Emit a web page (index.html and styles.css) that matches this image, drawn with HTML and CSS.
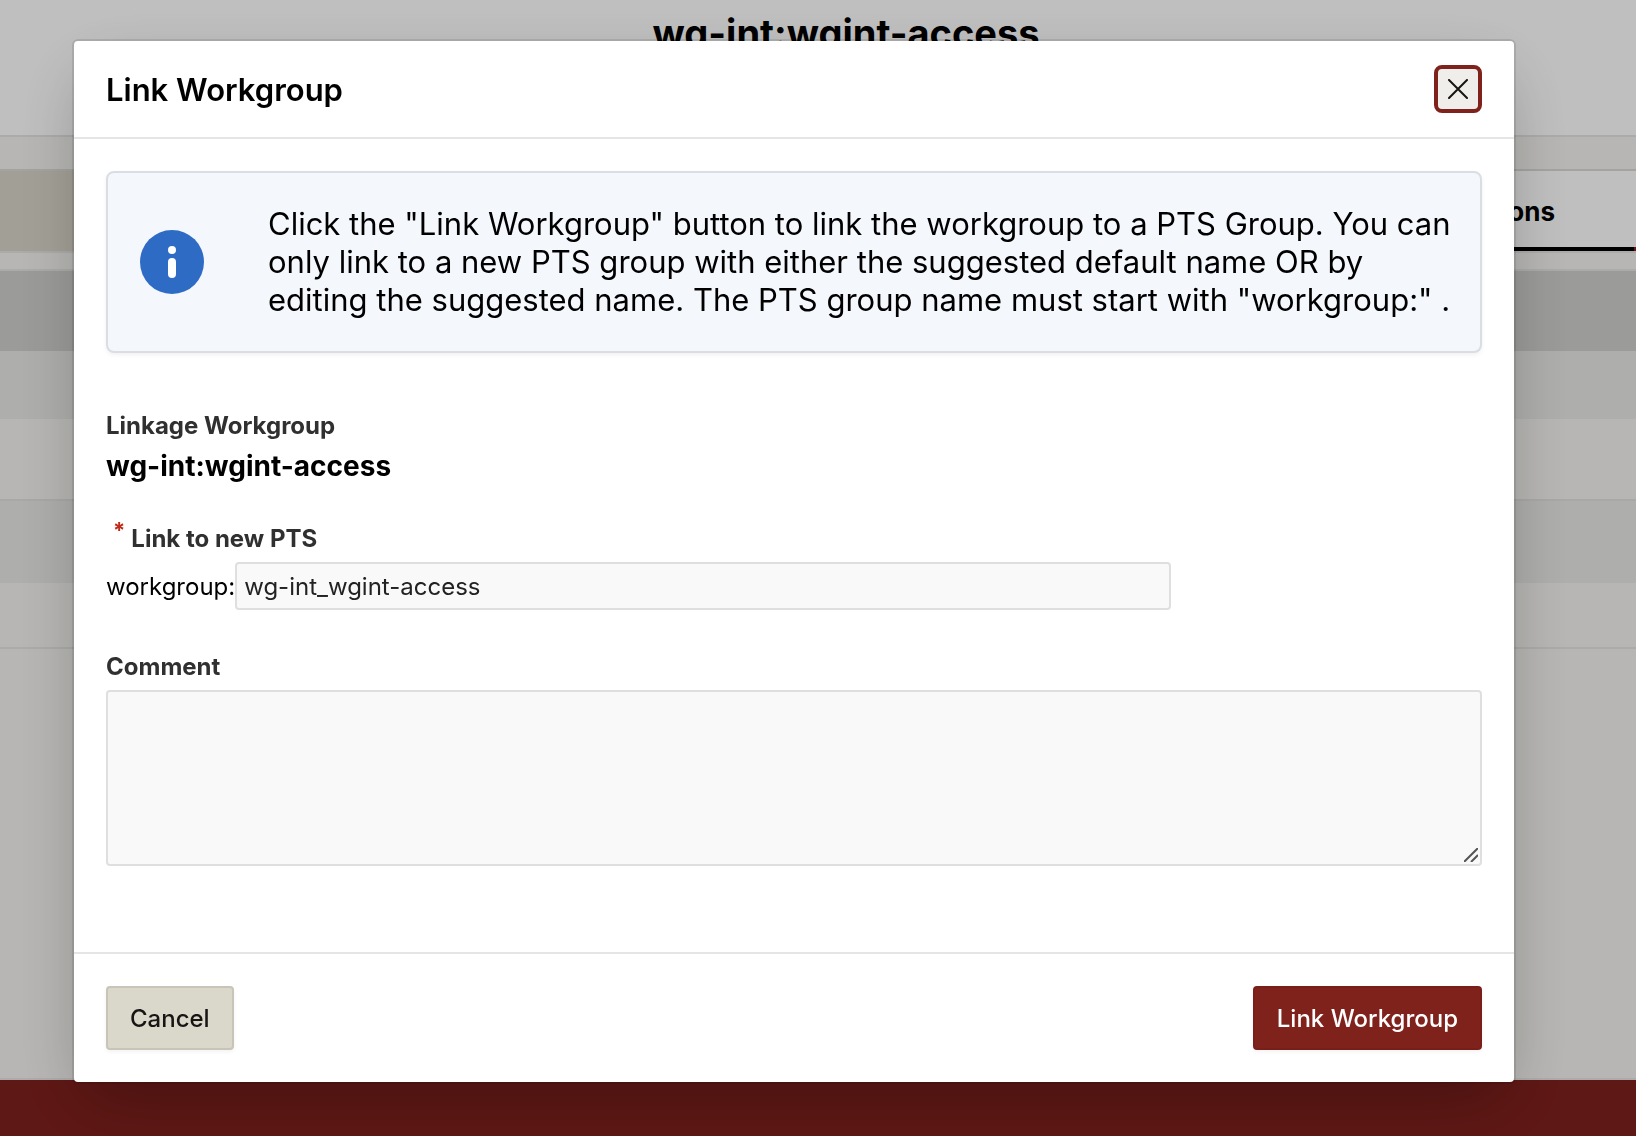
FILE: index.html
```html
<!DOCTYPE html>
<html lang="en">
    <head>
        <meta charset="UTF-8" />
        <meta name="viewport" content="width=device-width, initial-scale=1.0" />
        <title>Link Workgroup</title>
        <link rel="stylesheet" href="styles.css" />
    </head>
    <body>
        <!-- page behind the dialog -->
        <div class="page">
            <header class="page-header">
                <h1>wg-int:wgint-access</h1>
            </header>
            <main class="page-main">
                <nav class="tabs">
                    <div class="tab-side"></div>
                    <a href="#" class="tab on">ons</a>
                    <div class="tab-next"></div>
                </nav>
                <div class="rows">
                    <div class="row row-head"></div>
                    <div class="row row-first"></div>
                    <div class="row row-plain"></div>
                    <div class="row row-gray"></div>
                    <div class="row row-last"></div>
                </div>
            </main>
            <footer class="page-footer"></footer>
        </div>

        <!-- dialog -->
        <div class="overlay">
            <form class="dialog" role="dialog" aria-modal="true" aria-labelledby="dialog-title">
                <header class="dialog-header">
                    <h2 id="dialog-title">Link Workgroup</h2>
                    <button type="button" class="close" aria-label="Close">
                        <svg width="20" height="20" viewBox="0 0 20 20" fill="none" stroke="#161513" stroke-width="2" stroke-linecap="round">
                            <path d="M1 1 19 19M19 1 1 19" />
                        </svg>
                    </button>
                </header>

                <div class="dialog-body">
                    <div class="info">
                        <svg class="info-icon" width="64" height="64" viewBox="0 0 64 64">
                            <circle cx="32" cy="32" r="32" fill="#2d6bc4" />
                            <circle cx="32" cy="20" r="4" fill="#fff" />
                            <rect x="28" y="28" width="8" height="20" rx="4" fill="#fff" />
                        </svg>
                        <p>Click the "Link Workgroup" button to link the workgroup to a PTS Group. You can only link to a new PTS group with either the suggested default name OR by editing the suggested name. The PTS group name must start with "workgroup:" .</p>
                    </div>

                    <div class="field">
                        <span class="label">Linkage Workgroup</span>
                        <strong class="value">wg-int:wgint-access</strong>
                    </div>

                    <div class="field">
                        <label class="label label-required" for="pts"><span class="star">*</span>Link to new PTS</label>
                        <div class="input-line">
                            <span>workgroup:</span>
                            <input type="text" id="pts" value="wg-int_wgint-access" required />
                        </div>
                    </div>

                    <div class="field">
                        <label class="label" for="comment">Comment</label>
                        <div class="comment-box">
                            <textarea id="comment"></textarea>
                            <svg class="grip" width="14" height="14" viewBox="0 0 14 14" stroke="#555" stroke-width="2">
                                <path d="M0 14 14 0M7 14 14 7" />
                            </svg>
                        </div>
                    </div>
                </div>

                <footer class="dialog-footer">
                    <button type="button" class="btn">Cancel</button>
                    <button type="submit" class="btn btn-hot">Link Workgroup</button>
                </footer>
            </form>
        </div>
    </body>
</html>
```
FILE: styles.css
```css
* {
    box-sizing: border-box;
}

body {
    margin: 0;
    font-family: Inter, "Liberation Sans", sans-serif;
    font-size: 24px;
    color: #000;
    background: #f4f3f0;
}

h1,
h2,
p {
    margin: 0;
}

/* page behind */
.page {
    display: flex;
    flex-direction: column;
    height: 100vh;
}

.page-header {
    height: 137px;
    padding: 8px 0 0 56px;
    background: #fff;
    border-bottom: 2px solid #e4e4e4;
}

.page-header h1 {
    font-size: 38px;
    line-height: 50px;
    text-align: center;
}

.page-main {
    flex: 1;
    padding-top: 32px;
    border-bottom: 2px solid #e4e4e2;
}

.tabs {
    display: flex;
    height: 84px;
    border-top: 2px solid #dbdad8;
    border-bottom: 2px solid #e4e4e2;
}

.tab-side {
    flex: 1;
    background: #d9d6c9;
}

.tab {
    padding: 0 79px;
    font-size: 26px;
    font-weight: bold;
    line-height: 82px;
    color: #000;
    text-decoration: none;
    background: #fff;
}

.tab.on {
    box-shadow: inset 0 -4px 0 #000;
}

.tab-next {
    width: 2px;
    background: #fff;
    box-shadow: inset 0 -4px 0 #7e201c;
}

.rows {
    margin-top: 16px;
    border-top: 2px solid #e4e4e2;
    border-bottom: 2px solid #e4e4e2;
}

.row {
    height: 80px;
}

.row-head {
    background: #cfcfcd;
}

.row-first {
    height: 68px;
    background: #e8e8e6;
}

.row-gray {
    height: 84px;
    background: #e8e8e6;
    border-top: 2px solid #e0e0de;
}

.row-last {
    height: 64px;
}

.page-footer {
    height: 56px;
    background: #7e201c;
}

/* dialog */
.overlay {
    position: fixed;
    inset: 0;
    padding: 41px 122px 0 74px;
    background: rgba(0, 0, 0, 0.25);
    overflow: hidden;
}

.dialog {
    background: #fff;
    border-radius: 4px;
    box-shadow: 0 0 0 2px rgba(0, 0, 0, 0.1), 0 24px 64px -12px rgba(0, 0, 0, 0.28);
}

.dialog-header {
    display: flex;
    align-items: center;
    justify-content: space-between;
    height: 98px;
    padding: 0 32px;
    border-bottom: 2px solid #e5e5e5;
}

.dialog-header h2 {
    font-size: 31px;
    font-weight: 600;
}

.close {
    display: flex;
    align-items: center;
    justify-content: center;
    width: 48px;
    height: 48px;
    padding: 0;
    background: #f0eeea;
    border: 4px solid #80221c;
    border-radius: 8px;
}

.dialog-body {
    padding: 32px 32px 86px;
}

.info {
    display: flex;
    align-items: center;
    gap: 64px;
    margin-bottom: 56px;
    padding: 32px 24px 32px 32px;
    background: #f4f7fc;
    border: 2px solid #dadee2;
    border-radius: 8px;
    box-shadow: 0 2px 4px rgba(0, 0, 0, 0.06);
}

.info-icon {
    flex-shrink: 0;
}

.info p {
    font-size: 31px;
    line-height: 38px;
}

.field {
    margin-bottom: 40px;
}

.field:last-child {
    margin-bottom: 0;
}

.label {
    display: block;
    font-size: 24px;
    font-weight: bold;
    line-height: 34px;
    color: #303030;
}

.label-required {
    padding-left: 7px;
    margin-bottom: 6px;
}

.star {
    margin-right: 6px;
    font-size: 22px;
    line-height: 0;
    vertical-align: super;
    color: #c02a1a;
}

.value {
    display: block;
    margin-top: 7px;
    font-size: 28px;
    line-height: 32px;
}

.input-line {
    display: flex;
    align-items: center;
}

input,
textarea {
    display: block;
    font: inherit;
    color: #222;
    background: #f9f9f9;
    border: 2px solid #dfdfdf;
    border-radius: 4px;
}

input {
    width: 68%;
    height: 48px;
    padding: 0 7px;
}

.comment-box {
    position: relative;
    margin-top: 6px;
}

textarea {
    width: 100%;
    height: 176px;
    padding: 8px;
    resize: none;
}

.grip {
    position: absolute;
    right: 4px;
    bottom: 4px;
}

.dialog-footer {
    display: flex;
    justify-content: space-between;
    padding: 32px;
    border-top: 2px solid #e5e5e5;
}

.btn {
    height: 64px;
    padding: 0 22px;
    font: inherit;
    font-weight: 500;
    color: #161513;
    background: #dad7cb;
    border: 2px solid #c8c5b8;
    border-radius: 4px;
    box-shadow: 0 2px 4px rgba(0, 0, 0, 0.05);
}

.btn-hot {
    color: #fff;
    background: #80221c;
    border-color: #7a1e1a;
}
```
